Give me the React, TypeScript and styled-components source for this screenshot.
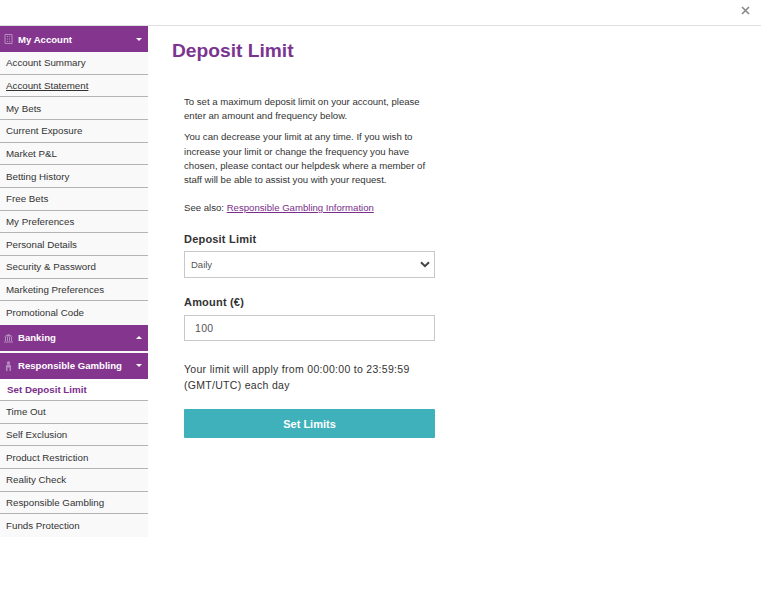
import React from 'react';
import styled, { createGlobalStyle } from 'styled-components';

const GlobalStyle = createGlobalStyle`
  html, body {
    margin: 0;
    padding: 0;
    background: #fff;
    font-family: "Liberation Sans", Arial, sans-serif;
  }
`;

const Page = styled.div`
  width: 761px;
  height: 607px;
  overflow: hidden;
`;

const TopBar = styled.div`
  display: flex;
  justify-content: flex-end;
  align-items: center;
  height: 26px;
  padding-right: 10px;
  box-sizing: border-box;
  border-bottom: 1px solid #e0e0e0;
`;

const CloseButton = styled.svg`
  width: 9px;
  height: 9px;
  margin-top: -4px;
  margin-right: 1px;
`;

const Body = styled.div`
  display: flex;
`;

const Sidebar = styled.nav`
  width: 148px;
  flex-shrink: 0;
  background: #f9f9f9;
  height: 511px;
`;

const GroupHeader = styled.div<{ $top?: number }>`
  display: flex;
  align-items: center;
  height: 26px;
  margin-top: ${p => p.$top ?? 0}px;
  padding: 0 6px 0 4px;
  box-sizing: border-box;
  background: #84368f;
  color: #fff;
  font-size: 9.6px;
  font-weight: bold;
`;

const GroupIcon = styled.svg`
  width: 9px;
  height: 10px;
  margin-right: 5px;
  flex-shrink: 0;
  color: #b68cbe;
`;

const GroupTitle = styled.span`
  flex: 1;
  white-space: nowrap;
`;

const Caret = styled.span<{ $up?: boolean }>`
  width: 0;
  height: 0;
  border-left: 3px solid transparent;
  border-right: 3px solid transparent;
  ${p => (p.$up ? 'border-bottom: 3px solid #fff;' : 'border-top: 3px solid #fff;')}
`;

const MenuItem = styled.div<{ $active?: boolean; $underline?: boolean; $last?: boolean }>`
  display: flex;
  align-items: center;
  height: ${p => (p.$active ? '22px' : '22.67px')};
  padding-left: ${p => (p.$active ? '7px' : '6px')};
  box-sizing: border-box;
  background: ${p => (p.$active ? '#fff' : '#f9f9f9')};
  border-bottom: ${p => (p.$last ? 'none' : '1px solid #b3b3b3')};
  color: ${p => (p.$active ? '#7b2d8b' : '#333')};
  font-size: 9.75px;
  font-weight: ${p => (p.$active ? 'bold' : 'normal')};
  text-decoration: ${p => (p.$underline ? 'underline' : 'none')};
`;

const Main = styled.main`
  width: 251px;
  margin-left: 36px;
  color: #333;
`;

const Title = styled.h1`
  margin: 11px 0 0 -12px;
  color: #7b3590;
  font-size: 19.2px;
  line-height: 27px;
  font-weight: bold;
  white-space: nowrap;
`;

const Intro = styled.p<{ $top: number }>`
  margin: ${p => p.$top}px 0 0;
  font-size: 9.6px;
  line-height: 14.2px;
  white-space: nowrap;
`;

const InfoLink = styled.a`
  color: #7b2d8b;
  text-decoration: underline;
`;

const FieldLabel = styled.label<{ $top: number }>`
  display: block;
  margin-top: ${p => p.$top}px;
  font-size: 11px;
  line-height: 14px;
  font-weight: bold;
  letter-spacing: 0.2px;
`;

const SelectBox = styled.div`
  display: flex;
  align-items: center;
  justify-content: space-between;
  height: 27px;
  margin-top: 5px;
  padding: 0 4px 0 6px;
  box-sizing: border-box;
  border: 1px solid #c8c8c8;
  color: #555;
  font-size: 9.5px;
`;

const Chevron = styled.svg`
  width: 10px;
  height: 7px;
`;

const AmountInput = styled.div`
  display: flex;
  align-items: center;
  height: 26px;
  margin-top: 6px;
  padding-left: 10px;
  box-sizing: border-box;
  border: 1px solid #c8c8c8;
  color: #555;
  font-size: 10.5px;
  letter-spacing: 0.3px;
`;

const LimitNote = styled.p`
  margin: 20px 0 0;
  font-size: 10.5px;
  line-height: 16px;
  letter-spacing: 0.3px;
  white-space: nowrap;
`;

const SubmitButton = styled.button`
  display: block;
  width: 100%;
  height: 29px;
  margin-top: 16px;
  padding: 0;
  border: none;
  border-radius: 1px;
  background: #3eb1bb;
  color: #fff;
  font-family: inherit;
  font-size: 11px;
  font-weight: bold;
`;

const accountItems = [
  'Account Summary',
  'Account Statement',
  'My Bets',
  'Current Exposure',
  'Market P&L',
  'Betting History',
  'Free Bets',
  'My Preferences',
  'Personal Details',
  'Security & Password',
  'Marketing Preferences',
  'Promotional Code',
];

const gamblingItems = [
  'Set Deposit Limit',
  'Time Out',
  'Self Exclusion',
  'Product Restriction',
  'Reality Check',
  'Responsible Gambling',
  'Funds Protection',
];

const AccountIcon = () => (
  <GroupIcon viewBox="0 0 9 10">
    <path d="M1 .5h7v9H1zM3 2.500h1M5 2.500h1M3 5h1M5 5h1M3 7.500h1M5 7.500h1" fill="none" stroke="currentColor" />
  </GroupIcon>
);

const BankIcon = () => (
  <GroupIcon viewBox="0 0 9 10">
    <path d="M4.500 1 9 3.500H0zM0 8.500h9v1H0z" fill="currentColor" />
    <path d="M1.500 4v4M3.500 4v4M5.500 4v4M7.500 4v4" stroke="currentColor" />
  </GroupIcon>
);

const PersonIcon = () => (
  <GroupIcon viewBox="0 0 9 10">
    <circle cx="4.500" cy="2" r="1.700" fill="currentColor" />
    <path d="M2 10V5q0-1.200 1.200-1.200h2.600Q7 3.800 7 5v5H5.500V6.500h-2V10z" fill="currentColor" />
  </GroupIcon>
);

const App = () => (
  <Page>
    <GlobalStyle />
    <TopBar>
      <CloseButton viewBox="0 0 9 9">
        <path d="M1 1l7 7M8 1 1 8" stroke="#888" strokeWidth="1.6" />
      </CloseButton>
    </TopBar>
    <Body>
      <Sidebar>
        <GroupHeader>
          <AccountIcon />
          <GroupTitle>My Account</GroupTitle>
          <Caret />
        </GroupHeader>
        {accountItems.map((item, i) => (
          <MenuItem key={item} $underline={i === 1} $last={i === accountItems.length - 1}>
            {item}
          </MenuItem>
        ))}
        <GroupHeader $top={1}>
          <BankIcon />
          <GroupTitle>Banking</GroupTitle>
          <Caret $up />
        </GroupHeader>
        <GroupHeader $top={2}>
          <PersonIcon />
          <GroupTitle>Responsible Gambling</GroupTitle>
          <Caret />
        </GroupHeader>
        {gamblingItems.map((item, i) => (
          <MenuItem key={item} $active={i === 0} $last={i === gamblingItems.length - 1}>
            {item}
          </MenuItem>
        ))}
      </Sidebar>
      <Main>
        <Title>Deposit Limit</Title>
        <Intro $top={31}>
          To set a maximum deposit limit on your account, please
          <br />
          enter an amount and frequency below.
        </Intro>
        <Intro $top={7}>
          You can decrease your limit at any time. If you wish to
          <br />
          increase your limit or change the frequency you have
          <br />
          chosen, please contact our helpdesk where a member of
          <br />
          staff will be able to assist you with your request.
        </Intro>
        <Intro $top={14}>
          See also: <InfoLink>Responsible Gambling Information</InfoLink>
        </Intro>
        <FieldLabel $top={17}>Deposit Limit</FieldLabel>
        <SelectBox>
          Daily
          <Chevron viewBox="0 0 10 7">
            <path d="M1 1.200l4 4 4-4" fill="none" stroke="#444" strokeWidth="2" />
          </Chevron>
        </SelectBox>
        <FieldLabel $top={17}>Amount (€)</FieldLabel>
        <AmountInput>100</AmountInput>
        <LimitNote>
          Your limit will apply from 00:00:00 to 23:59:59
          <br />
          (GMT/UTC) each day
        </LimitNote>
        <SubmitButton>Set Limits</SubmitButton>
      </Main>
    </Body>
  </Page>
);

export default App;
